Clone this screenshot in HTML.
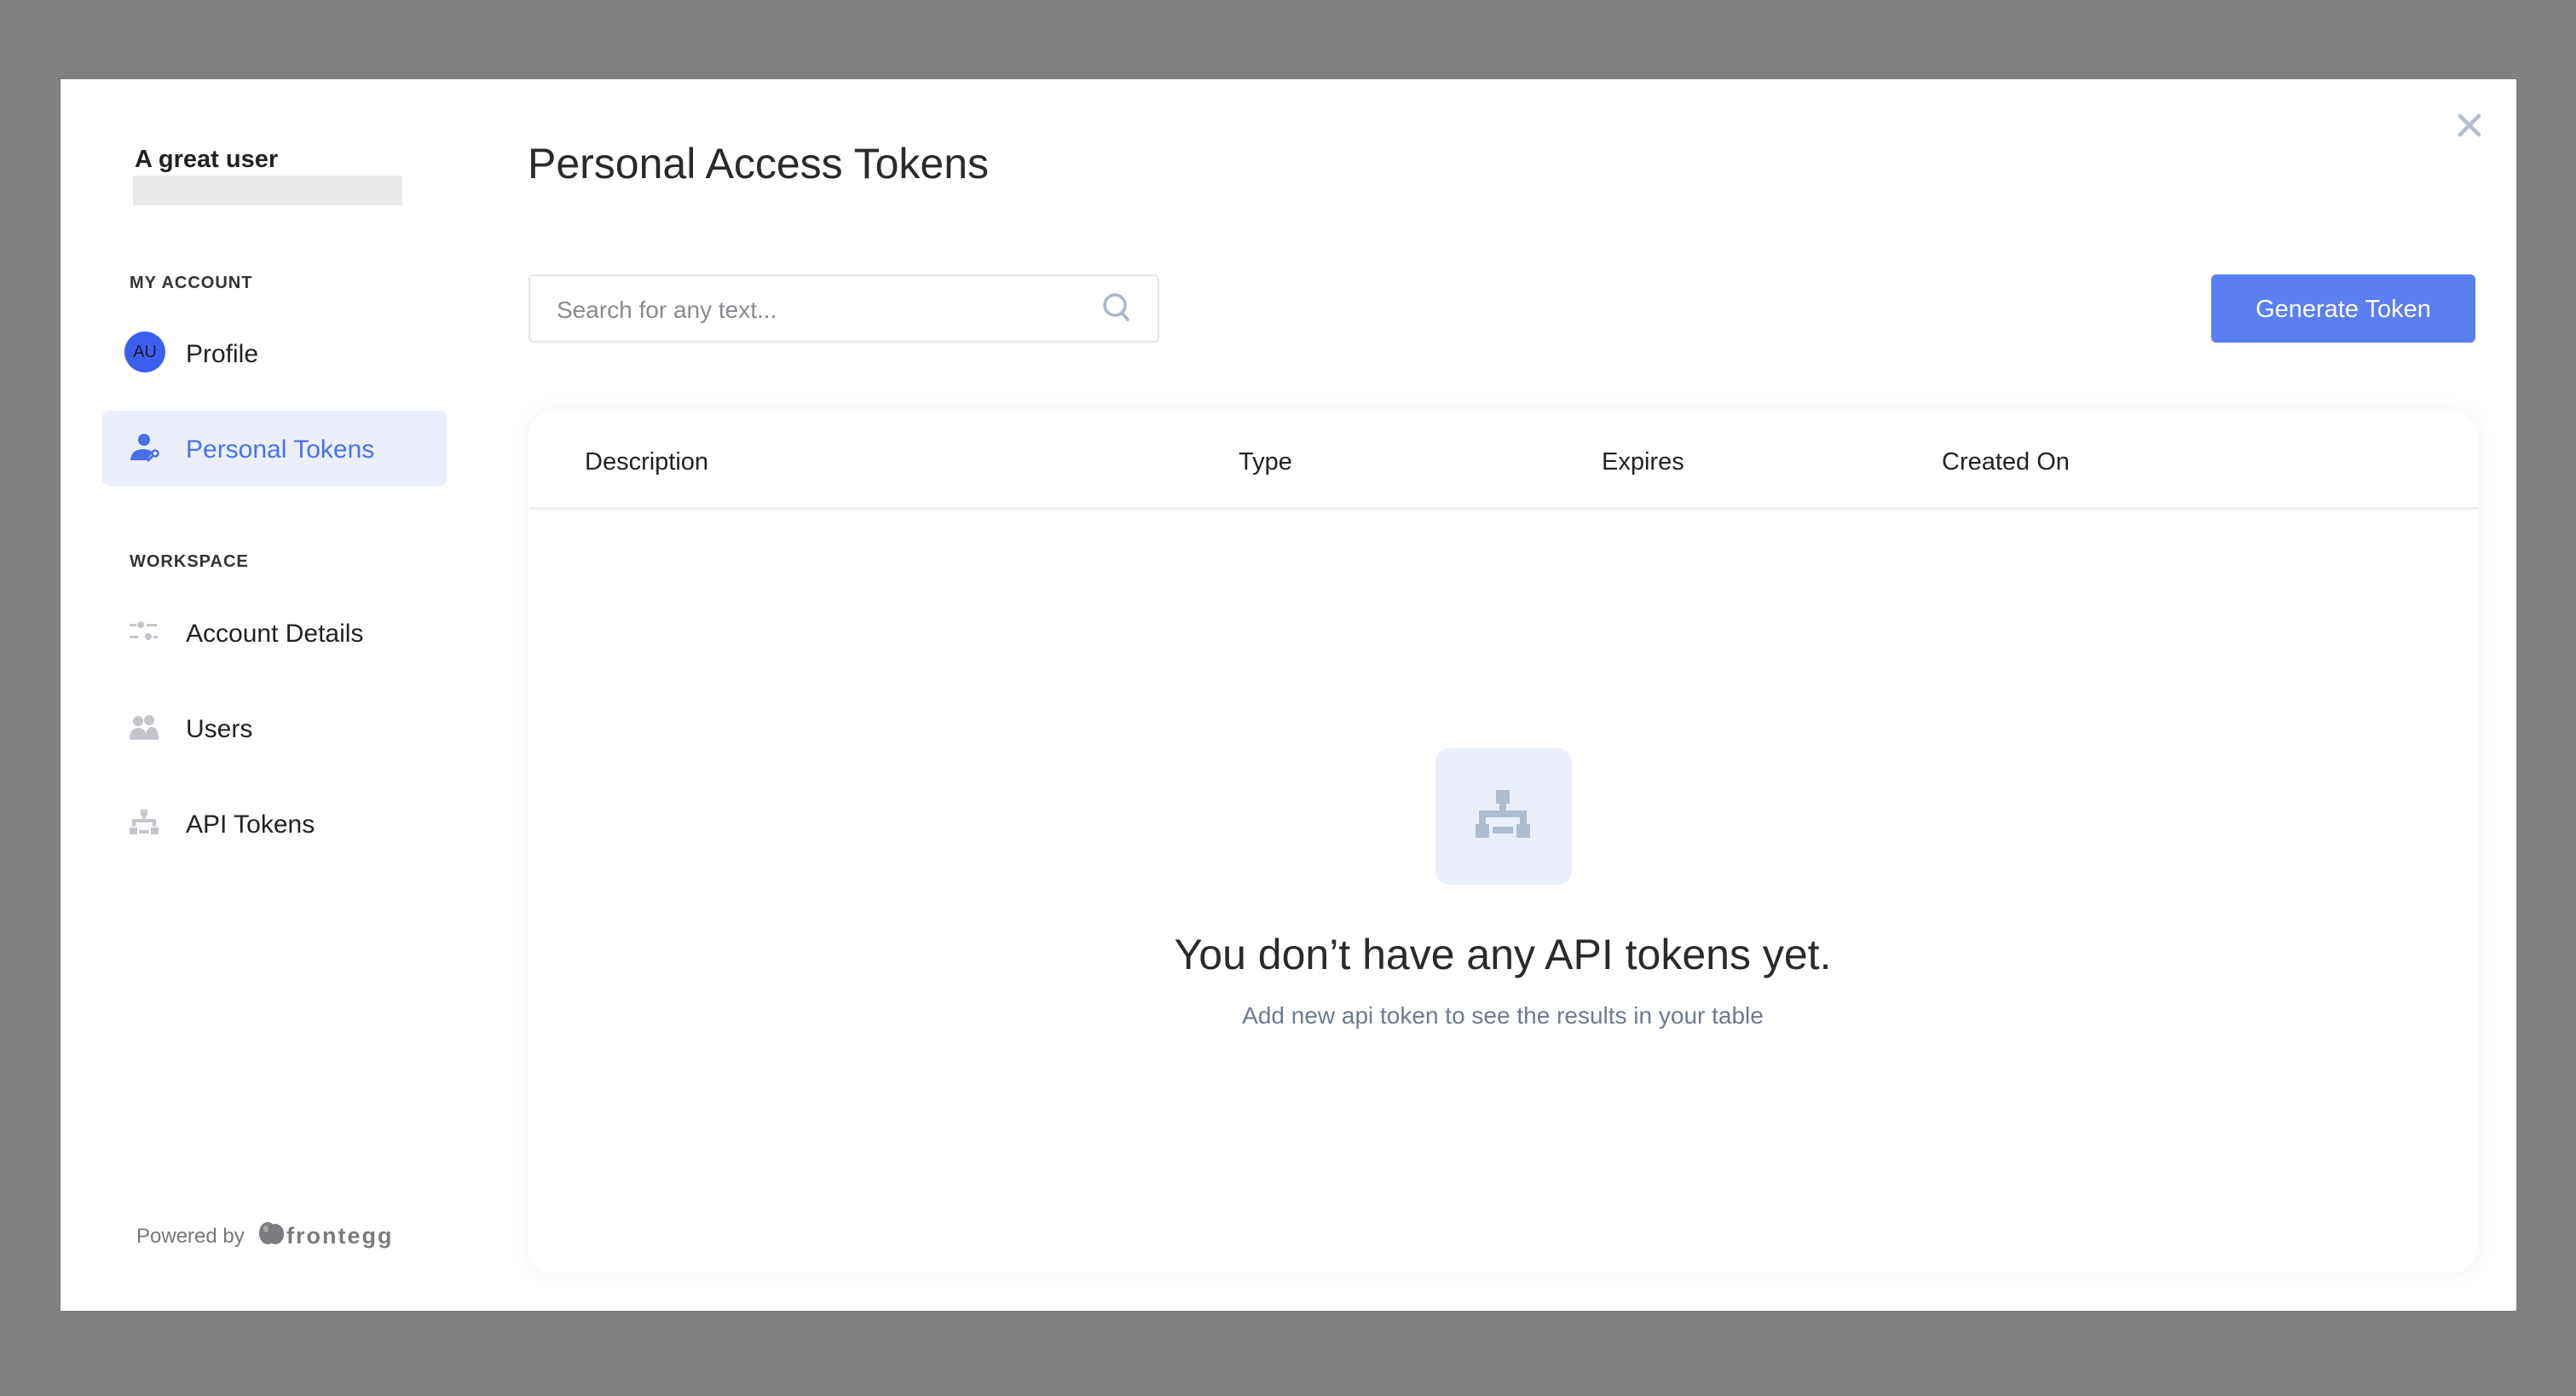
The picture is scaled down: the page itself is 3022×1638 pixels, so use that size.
<!DOCTYPE html>
<html><head><meta charset="utf-8"><style>
*{margin:0;padding:0;box-sizing:border-box}
body{width:3022px;height:1638px;background:#808080;font-family:"Liberation Sans",sans-serif;position:relative;overflow:hidden}
.m{position:absolute;left:71px;top:93px;width:2881px;height:1445px;background:#fff}
.a{position:absolute;white-space:nowrap}
.t{line-height:60px;height:60px;margin-top:2px}
</style></head><body>
<div class="m"></div>
<div class="a t" style="left:158px;top:155px;font-size:29px;font-weight:bold;color:#222">A great user</div>
<div class="a" style="left:156px;top:206px;width:316px;height:35px;background:#eaeaea"></div>
<div class="a t" style="left:152px;top:300px;font-size:20px;font-weight:bold;color:#333;letter-spacing:1px">MY ACCOUNT</div>
<div class="a" style="left:146px;top:389px;width:48px;height:48px;border-radius:50%;background:#3d5ff0;color:#1a1a2e;font-size:20px;line-height:48px;text-align:center">AU</div>
<div class="a t" style="left:218px;top:384px;font-size:30px;color:#222">Profile</div>
<div class="a" style="left:120px;top:482px;width:404px;height:88px;border-radius:8px;background:#ebeffb"></div>
<svg class="a" style="left:152px;top:508px" width="36" height="34" viewBox="0 0 36 34"><circle cx="17" cy="8" r="7" fill="#4a6ee8"/><path d="M1 32 Q2 19 16 19 Q24 19 27 23 L20 32Z" fill="#4a6ee8"/><circle cx="30" cy="24" r="3.5" fill="none" stroke="#4a6ee8" stroke-width="2.5"/><path d="M28 26 L21 33" stroke="#4a6ee8" stroke-width="3"/></svg>
<div class="a t" style="left:218px;top:496px;font-size:30px;color:#4a72e8">Personal Tokens</div>
<div class="a t" style="left:152px;top:627px;font-size:20px;font-weight:bold;color:#333;letter-spacing:1px">WORKSPACE</div>
<svg class="a" style="left:152px;top:728px" width="34" height="28" viewBox="0 0 34 28"><g fill="#c4c6cc"><rect x="0" y="4" width="8" height="3"/><circle cx="13" cy="5" r="4"/><rect x="20" y="4" width="12" height="3"/><rect x="0" y="18" width="10" height="3"/><circle cx="22" cy="19" r="4"/><rect x="28" y="18" width="5" height="3"/></g></svg>
<div class="a t" style="left:218px;top:712px;font-size:30px;color:#222">Account Details</div>
<svg class="a" style="left:152px;top:838px" width="34" height="30" viewBox="0 0 34 30"><g fill="#c4c6cc"><circle cx="10" cy="8" r="6"/><circle cx="23" cy="7" r="6"/><path d="M0 30 Q0 16 11 16 Q20 16 20 30Z"/><path d="M18 30 Q19 15 26 15 Q34 15 34 30Z"/></g></svg>
<div class="a t" style="left:218px;top:824px;font-size:30px;color:#222">Users</div>
<svg class="a" style="left:152px;top:950px" width="34" height="30" viewBox="0 0 34 30"><g fill="#c4c6cc"><rect x="13" y="0" width="8" height="7"/><rect x="15" y="7" width="4" height="5"/><rect x="3" y="11" width="28" height="4"/><rect x="3" y="11" width="4" height="9"/><rect x="27" y="11" width="4" height="9"/><rect x="0" y="21" width="9" height="8"/><rect x="25" y="21" width="9" height="8"/><rect x="11" y="24" width="12" height="4"/></g></svg>
<div class="a t" style="left:218px;top:936px;font-size:30px;color:#222">API Tokens</div>
<div class="a t" style="left:160px;top:1419px;font-size:24px;color:#777">Powered by</div>
<svg class="a" style="left:303px;top:1432px" width="32" height="30" viewBox="0 0 32 30"><ellipse cx="11" cy="15" rx="10" ry="13" fill="#7b7b80"/><ellipse cx="20" cy="16" rx="10" ry="12" fill="#7b7b80"/><ellipse cx="9" cy="10" rx="3" ry="4" fill="#aaa"/></svg>
<div class="a t" style="left:336px;top:1418px;font-size:27px;font-weight:bold;color:#7b7b80;letter-spacing:2px">frontegg</div>
<div class="a" style="left:619px;top:159px;font-size:50px;line-height:66px;color:#2a2a2a">Personal Access Tokens</div>
<svg class="a" style="left:2883px;top:133px" width="28" height="28" viewBox="0 0 28 28"><path d="M3 3L25 25M25 3L3 25" stroke="#b4bdd0" stroke-width="4.5" stroke-linecap="round"/></svg>
<div class="a" style="left:620px;top:322px;width:740px;height:80px;border:2px solid #e5e6ea;border-radius:6px"></div>
<div class="a t" style="left:653px;top:332px;font-size:28px;color:#8a8a90">Search for any text...</div>
<svg class="a" style="left:1293px;top:343px" width="36" height="38" viewBox="0 0 36 38"><circle cx="15" cy="15" r="12" fill="none" stroke="#aab5cc" stroke-width="3.5"/><path d="M24 25L30 32" stroke="#aab5cc" stroke-width="3.5" stroke-linecap="round"/></svg>
<div class="a" style="left:2594px;top:322px;width:310px;height:80px;border-radius:6px;background:#5a7ff0;color:#fff;font-size:29px;line-height:82px;text-align:center">Generate Token</div>
<div class="a" style="left:620px;top:483px;width:2286px;height:1010px;border-radius:28px;background:#fff;box-shadow:0 0 24px rgba(120,130,170,0.10)"></div>
<div class="a" style="left:622px;top:595px;width:2284px;height:3px;background:#eceef3"></div>
<div class="a t" style="left:686px;top:510px;font-size:29px;color:#222">Description</div>
<div class="a t" style="left:1453px;top:510px;font-size:29px;color:#222">Type</div>
<div class="a t" style="left:1879px;top:510px;font-size:29px;color:#222">Expires</div>
<div class="a t" style="left:2278px;top:510px;font-size:29px;color:#222">Created On</div>
<div class="a" style="left:1684px;top:878px;width:160px;height:160px;border-radius:16px;background:#ebeffb"></div>
<svg class="a" style="left:1731px;top:925px" width="66" height="66" viewBox="0 0 66 66"><g fill="#aebbd0"><rect x="24" y="2" width="16" height="16"/><rect x="28" y="18" width="8" height="8"/><rect x="4" y="26" width="56" height="8" rx="3"/><rect x="4" y="26" width="8" height="16"/><rect x="52" y="26" width="8" height="16"/><rect x="0" y="42" width="16" height="16"/><rect x="48" y="42" width="16" height="16"/><rect x="20" y="45" width="24" height="8"/></g></svg>
<div class="a" style="left:1263px;top:1087px;width:1000px;text-align:center;font-size:50px;line-height:66px;color:#2a2a2a">You don’t have any API tokens yet.</div>
<div class="a" style="left:1263px;top:1172px;width:1000px;text-align:center;font-size:28px;line-height:40px;color:#6e7a93">Add new api token to see the results in your table</div>
</body></html>
